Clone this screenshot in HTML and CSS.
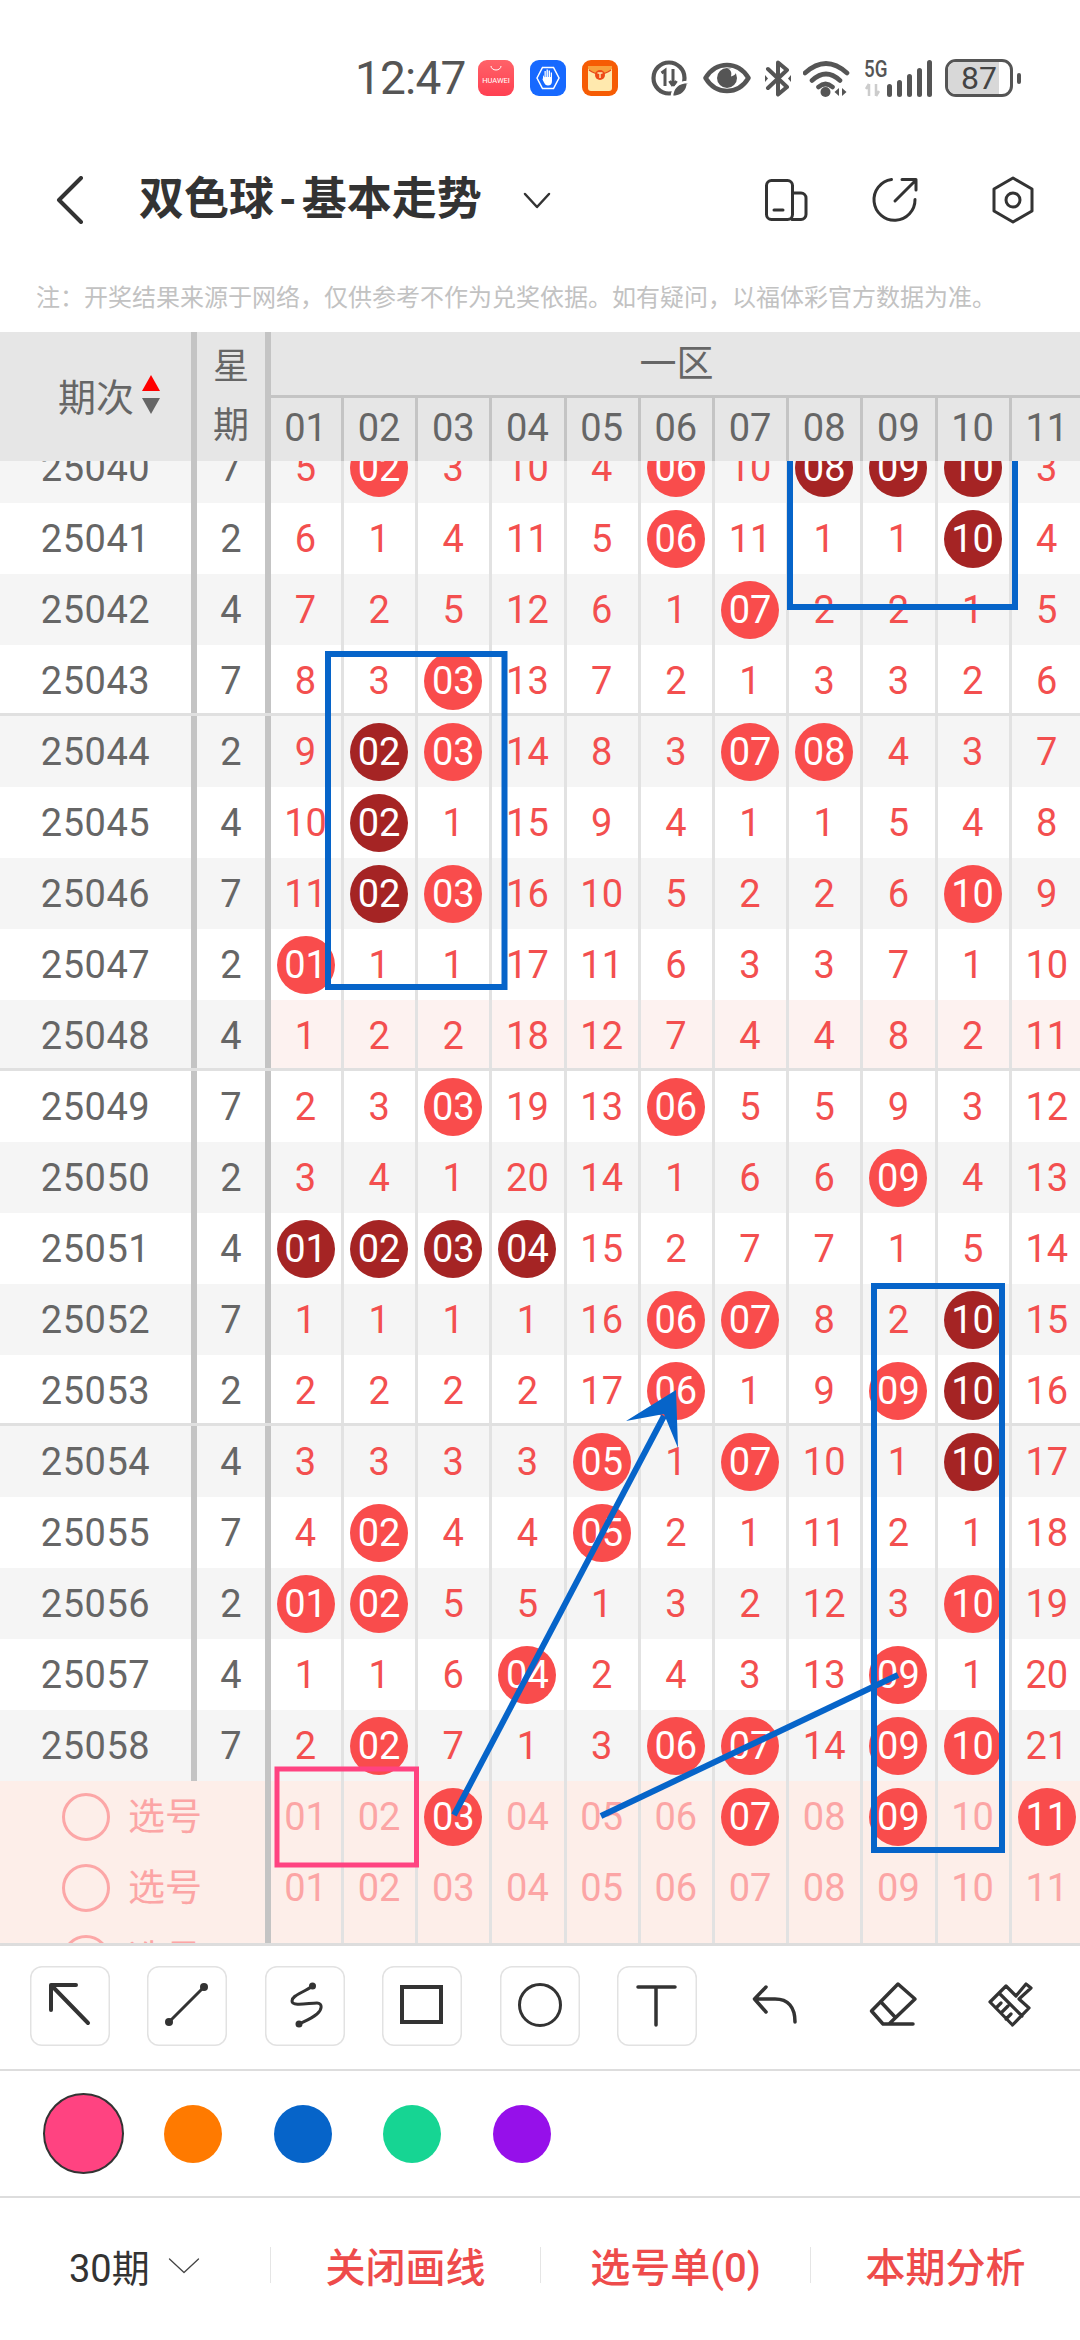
FILE: index.html
```html
<!DOCTYPE html>
<html lang="zh">
<head>
<meta charset="utf-8">
<title>双色球-基本走势</title>
<link rel="stylesheet" href="styles.css">
</head>
<body>
<div class="page">
  <header class="status">
    <span class="time">12:47</span>
    <span class="app app-red"><svg class="smile" viewBox="0 0 12 6" width="12" height="6"><path d="M1 1a5 4 0 0 0 10 0" fill="none" stroke="#fff" stroke-width="1"/></svg><span class="app-label">HUAWEI</span></span>
    <svg class="app app-blue" viewBox="0 0 36 36" width="36" height="36"><rect width="36" height="36" rx="9" fill="#1769ff"/><path d="M7 18 12.500 7.500h11L29 18l-5.500 10.500h-11Z" fill="none" stroke="#fff" stroke-width="1.500"/><path d="M13 18v-3l1.500 2.500V11h1.300v6h.7V9.500h1.400V17h.7v-6.500h1.400V17h.7v-4.500h1.300V21c0 3-1.500 4.500-4 4.500-2.200 0-3-1-4-3l-1.500-3Z" fill="#fff"/></svg>
    <svg class="app app-orange" viewBox="0 0 36 36" width="36" height="36"><rect width="36" height="36" rx="9" fill="#f65c04"/><rect x="6" y="6" width="24" height="25" rx="3" fill="#ffe9ae"/><path d="M6 9q12 10 24 0V6H6Z" fill="#f8a13c"/><path d="M7 10q11 8 22 0" fill="none" stroke="#e8481a" stroke-width="1.500"/><circle cx="18" cy="15" r="5" fill="#ef4a18"/><path d="M15.500 13h5M18 13v5" stroke="#ffe9ae" stroke-width="1.400"/></svg>
    <svg class="st-data" viewBox="0 0 37 37" width="37" height="37"><circle cx="18" cy="18" r="15.500" fill="none" stroke="#555" stroke-width="4.200"/><path d="M10.500 13l3.500-2.500V26M22 9v16M22 26l-3.500-5M22 26l3.500-5" fill="none" stroke="#555" stroke-width="3"/><path d="M21 37c0-9 6-15 16-15 0 9-6 15-16 15Z" fill="#555" stroke="#fff" stroke-width="2.500"/></svg>
    <svg class="st-eye" viewBox="0 0 48 32" width="48" height="32"><path d="M2.500 16C8 7 15 3 24 3s16 4 21.500 13C40 25 33 29 24 29S8 25 2.500 16Z" fill="none" stroke="#555" stroke-width="4.500" stroke-linejoin="round"/><circle cx="24" cy="16" r="10" fill="#555"/><path d="M24 6.500c4 1 5 4 4 8 4-1 5-3 5-5-2-2-5-3-9-3Z" fill="#fff"/></svg>
    <svg class="st-bt" viewBox="0 0 26 37" width="26" height="37"><path d="M3 9l19 18-9 7.500V2.500L22 10 3 28" fill="none" stroke="#555" stroke-width="4" stroke-linejoin="round" stroke-linecap="round"/><path d="M0 15v7l3-3.500ZM26 15v7l-3-3.500Z" fill="#555"/></svg>
    <svg class="st-wifi" viewBox="0 0 48 37" width="48" height="37"><path d="M2 13q21-19 42 0M9 20.500q14-13 28 0M15.500 27q7-6 14 0" fill="none" stroke="#555" stroke-width="4.600" stroke-linecap="round"/><circle cx="22.500" cy="32" r="5" fill="#555"/><path d="M36 28v8l-4.500-4ZM39 28v8l4.500-4Z" fill="#555"/></svg>
    <span class="st-sig">
      <span class="st-5g">5G</span>
      <svg viewBox="0 0 68 37" width="68" height="37"><path d="M5 24v12M5 24l-3 5M12 36V24M12 36l3-5" fill="none" stroke="#ccc" stroke-width="2.500"/><g fill="#555"><rect x="23" y="24" width="5" height="13" rx="2.500"/><rect x="33" y="20" width="5" height="17" rx="2.500"/><rect x="43" y="14" width="5" height="23" rx="2.500"/><rect x="53" y="8" width="5" height="29" rx="2.500"/><rect x="63" y="0" width="5" height="37" rx="2.500"/></g></svg>
    </span>
    <span class="battery"><span class="battery-fill"></span><span class="battery-num">87</span></span>
    <span class="battery-tip"></span>
  </header>

  <nav class="appbar">
    <svg class="nav-back" viewBox="0 0 28 48" width="28" height="48"><path d="M25 2 3 24l22 22" fill="none" stroke="#333" stroke-width="4" stroke-linecap="round" stroke-linejoin="round"/></svg>
    <h1 class="title">双色球<span class="title-dash">-</span>基本走势</h1>
    <svg class="nav-drop" viewBox="0 0 28 17" width="28" height="17"><path d="M2 2l12 13L26 2" fill="none" stroke="#333" stroke-width="2.500" stroke-linecap="round" stroke-linejoin="round"/></svg>
    <svg class="nav-device" viewBox="0 0 44 44" width="44" height="44"><rect x="2.500" y="2.500" width="26" height="39" rx="5" fill="none" stroke="#333" stroke-width="3"/><path d="M28.500 15H37a5 5 0 0 1 5 5v16.500a5 5 0 0 1-5 5h-9M10 32h9" fill="none" stroke="#333" stroke-width="3" stroke-linecap="round"/></svg>
    <svg class="nav-share" viewBox="0 0 48 48" width="48" height="48"><path d="M20.500 3.500A20.500 20.500 0 1 0 44 23.500M24 25 45 4M31 3.500h14V14" fill="none" stroke="#333" stroke-width="3" stroke-linecap="round" stroke-linejoin="round"/></svg>
    <svg class="nav-set" viewBox="0 0 44 48" width="44" height="48"><path d="M22 2 41 13v22L22 46 3 35V13Z" fill="none" stroke="#333" stroke-width="3" stroke-linejoin="round"/><circle cx="22" cy="24" r="7" fill="none" stroke="#333" stroke-width="3"/></svg>
  </nav>

  <p class="note">注：开奖结果来源于网络，仅供参考不作为兑奖依据。如有疑问，以福体彩官方数据为准。</p>

  <section class="table">
    <div class="thead">
      <div class="th-issue"><span>期次</span><span class="sort"><span class="sort-up"></span><span class="sort-down"></span></span></div>
      <div class="th-week"><span>星</span><span>期</span></div>
      <div class="th-zone">
        <div class="zone-name">一区</div>
        <div class="zone-nums"><i>01</i><i>02</i><i>03</i><i>04</i><i>05</i><i>06</i><i>07</i><i>08</i><i>09</i><i>10</i><i>11</i></div>
      </div>
    </div>
    <div class="tbody">
      <div class="rows">
        <div class="row alt"><span class="issue">25040</span><span class="wk">7</span><i>5</i><i><b class="hot">02</b></i><i>3</i><i>10</i><i>4</i><i><b class="hot">06</b></i><i>10</i><i><b class="dark">08</b></i><i><b class="dark">09</b></i><i><b class="dark">10</b></i><i>3</i></div>
        <div class="row"><span class="issue">25041</span><span class="wk">2</span><i>6</i><i>1</i><i>4</i><i>11</i><i>5</i><i><b class="hot">06</b></i><i>11</i><i>1</i><i>1</i><i><b class="dark">10</b></i><i>4</i></div>
        <div class="row alt"><span class="issue">25042</span><span class="wk">4</span><i>7</i><i>2</i><i>5</i><i>12</i><i>6</i><i>1</i><i><b class="hot">07</b></i><i>2</i><i>2</i><i>1</i><i>5</i></div>
        <div class="row sep"><span class="issue">25043</span><span class="wk">7</span><i>8</i><i>3</i><i><b class="hot">03</b></i><i>13</i><i>7</i><i>2</i><i>1</i><i>3</i><i>3</i><i>2</i><i>6</i></div>
        <div class="row alt"><span class="issue">25044</span><span class="wk">2</span><i>9</i><i><b class="dark">02</b></i><i><b class="hot">03</b></i><i>14</i><i>8</i><i>3</i><i><b class="hot">07</b></i><i><b class="hot">08</b></i><i>4</i><i>3</i><i>7</i></div>
        <div class="row"><span class="issue">25045</span><span class="wk">4</span><i>10</i><i><b class="dark">02</b></i><i>1</i><i>15</i><i>9</i><i>4</i><i>1</i><i>1</i><i>5</i><i>4</i><i>8</i></div>
        <div class="row alt"><span class="issue">25046</span><span class="wk">7</span><i>11</i><i><b class="dark">02</b></i><i><b class="hot">03</b></i><i>16</i><i>10</i><i>5</i><i>2</i><i>2</i><i>6</i><i><b class="hot">10</b></i><i>9</i></div>
        <div class="row"><span class="issue">25047</span><span class="wk">2</span><i><b class="hot">01</b></i><i>1</i><i>1</i><i>17</i><i>11</i><i>6</i><i>3</i><i>3</i><i>7</i><i>1</i><i>10</i></div>
        <div class="row alt sep tint"><span class="issue">25048</span><span class="wk">4</span><i>1</i><i>2</i><i>2</i><i>18</i><i>12</i><i>7</i><i>4</i><i>4</i><i>8</i><i>2</i><i>11</i></div>
        <div class="row"><span class="issue">25049</span><span class="wk">7</span><i>2</i><i>3</i><i><b class="hot">03</b></i><i>19</i><i>13</i><i><b class="hot">06</b></i><i>5</i><i>5</i><i>9</i><i>3</i><i>12</i></div>
        <div class="row alt"><span class="issue">25050</span><span class="wk">2</span><i>3</i><i>4</i><i>1</i><i>20</i><i>14</i><i>1</i><i>6</i><i>6</i><i><b class="hot">09</b></i><i>4</i><i>13</i></div>
        <div class="row"><span class="issue">25051</span><span class="wk">4</span><i><b class="dark">01</b></i><i><b class="dark">02</b></i><i><b class="dark">03</b></i><i><b class="dark">04</b></i><i>15</i><i>2</i><i>7</i><i>7</i><i>1</i><i>5</i><i>14</i></div>
        <div class="row alt"><span class="issue">25052</span><span class="wk">7</span><i>1</i><i>1</i><i>1</i><i>1</i><i>16</i><i><b class="hot">06</b></i><i><b class="hot">07</b></i><i>8</i><i>2</i><i><b class="dark">10</b></i><i>15</i></div>
        <div class="row sep"><span class="issue">25053</span><span class="wk">2</span><i>2</i><i>2</i><i>2</i><i>2</i><i>17</i><i><b class="hot">06</b></i><i>1</i><i>9</i><i><b class="hot">09</b></i><i><b class="dark">10</b></i><i>16</i></div>
        <div class="row alt"><span class="issue">25054</span><span class="wk">4</span><i>3</i><i>3</i><i>3</i><i>3</i><i><b class="hot">05</b></i><i>1</i><i><b class="hot">07</b></i><i>10</i><i>1</i><i><b class="dark">10</b></i><i>17</i></div>
        <div class="row"><span class="issue">25055</span><span class="wk">7</span><i>4</i><i><b class="hot">02</b></i><i>4</i><i>4</i><i><b class="hot">05</b></i><i>2</i><i>1</i><i>11</i><i>2</i><i>1</i><i>18</i></div>
        <div class="row alt"><span class="issue">25056</span><span class="wk">2</span><i><b class="hot">01</b></i><i><b class="hot">02</b></i><i>5</i><i>5</i><i>1</i><i>3</i><i>2</i><i>12</i><i>3</i><i><b class="hot">10</b></i><i>19</i></div>
        <div class="row"><span class="issue">25057</span><span class="wk">4</span><i>1</i><i>1</i><i>6</i><i><b class="hot">04</b></i><i>2</i><i>4</i><i>3</i><i>13</i><i><b class="hot">09</b></i><i>1</i><i>20</i></div>
        <div class="row alt"><span class="issue">25058</span><span class="wk">7</span><i>2</i><i><b class="hot">02</b></i><i>7</i><i>1</i><i>3</i><i><b class="hot">06</b></i><i><b class="hot">07</b></i><i>14</i><i><b class="hot">09</b></i><i><b class="hot">10</b></i><i>21</i></div>
        <div class="row pick"><span class="pick-label"><span class="radio"></span><span class="pick-text">选号</span></span><i>01</i><i>02</i><i><b class="hot">03</b></i><i>04</i><i>05</i><i>06</i><i><b class="hot">07</b></i><i>08</i><i><b class="hot">09</b></i><i>10</i><i><b class="hot">11</b></i></div>
        <div class="row pick"><span class="pick-label"><span class="radio"></span><span class="pick-text">选号</span></span><i>01</i><i>02</i><i>03</i><i>04</i><i>05</i><i>06</i><i>07</i><i>08</i><i>09</i><i>10</i><i>11</i></div>
        <div class="row pick"><span class="pick-label"><span class="radio"></span><span class="pick-text">选号</span></span><i>01</i><i>02</i><i>03</i><i>04</i><i>05</i><i>06</i><i>07</i><i>08</i><i>09</i><i>10</i><i>11</i></div>
      </div>
      <svg class="sketch" viewBox="0 461 1080 1482" width="1080" height="1482">
        <g fill="none" stroke="#0664c9" stroke-width="6">
          <rect x="790" y="420" width="225" height="187"/>
          <rect x="328" y="654" width="176.500" height="333"/>
          <rect x="874" y="1286" width="128" height="564"/>
          <path d="M454 1815 664 1416"/>
          <path d="M601 1816 898 1675"/>
        </g>
        <rect x="277" y="1769" width="139.500" height="96" fill="none" stroke="#ff4381" stroke-width="5"/>
        <path d="M676 1390 626 1421 664 1414 678 1448Z" fill="#0664c9"/>
      </svg>
    </div>
  </section>

  <section class="tools">
    <span class="tool framed"><svg viewBox="0 0 80 80" width="80" height="80"><path d="M46 19H21v25M22 20l36 37" fill="none" stroke="#333" stroke-width="4" stroke-linecap="round" stroke-linejoin="round"/></svg></span>
    <span class="tool framed"><svg viewBox="0 0 80 80" width="80" height="80"><path d="M57 21 22 56" stroke="#333" stroke-width="3"/><circle cx="57" cy="21" r="4" fill="#333"/><circle cx="22" cy="56" r="4" fill="#333"/></svg></span>
    <span class="tool framed"><svg viewBox="0 0 80 80" width="80" height="80"><path d="M47.500 20C38 27 27 29 27 35c0 6 17 2 25 2 6 0 5 7 0 11-6 5-12 7-18 10" fill="none" stroke="#333" stroke-width="3"/><circle cx="47.500" cy="20" r="3.500" fill="#333"/><circle cx="34" cy="58" r="3.500" fill="#333"/></svg></span>
    <span class="tool framed"><svg viewBox="0 0 80 80" width="80" height="80"><rect x="20" y="21" width="39" height="35" fill="none" stroke="#333" stroke-width="4"/></svg></span>
    <span class="tool framed"><svg viewBox="0 0 80 80" width="80" height="80"><circle cx="40" cy="39" r="20.500" fill="none" stroke="#333" stroke-width="3"/></svg></span>
    <span class="tool framed"><svg viewBox="0 0 80 80" width="80" height="80"><path d="M21 21h37M39 21v38" fill="none" stroke="#333" stroke-width="3.500" stroke-linecap="round"/></svg></span>
    <span class="tool"><svg viewBox="0 0 80 80" width="80" height="80"><path d="M31 21 19.500 33 31 46M20 33h20c13 0 20 8 20 23" fill="none" stroke="#333" stroke-width="3.500" stroke-linecap="round" stroke-linejoin="round"/></svg></span>
    <span class="tool"><svg viewBox="0 0 80 80" width="80" height="80"><path d="M45 18 62 33 36 58h-6L18.500 45ZM27.500 35.500 42 51M30 58h30" fill="none" stroke="#333" stroke-width="3.500" stroke-linecap="round" stroke-linejoin="round"/></svg></span>
    <span class="tool"><svg viewBox="0 0 80 80" width="80" height="80"><path d="M36 20 46 30 56 18l5 4-12 11 10 9-16.500 17L20 36ZM30 28 52 50M26 42l5-5M31 47l7-7M36 53l5-5" fill="none" stroke="#333" stroke-width="3.200" stroke-linecap="round" stroke-linejoin="round"/></svg></span>
  </section>

  <section class="colors">
    <span class="swatch swatch-big"></span>
    <span class="swatch swatch-orange"></span>
    <span class="swatch swatch-blue"></span>
    <span class="swatch swatch-green"></span>
    <span class="swatch swatch-purple"></span>
  </section>

  <footer class="bottom">
    <span class="bottom-range">30期<svg viewBox="0 0 32 17" width="32" height="17"><path d="M1.500 2 16 15.500 30.500 2" fill="none" stroke="#444" stroke-width="1.300" stroke-linecap="round" stroke-linejoin="round"/></svg></span>
    <span class="bottom-act">关闭画线</span>
    <span class="bottom-act">选号单(0)</span>
    <span class="bottom-act">本期分析</span>
  </footer>
</div>
</body>
</html>
```
FILE: styles.css
```css
* { box-sizing: border-box; }
html, body { margin: 0; padding: 0; background: #fff; }
body { font-family: Roboto, "Noto Sans CJK SC", sans-serif; color: #333; }
.page { width: 1080px; height: 2340px; overflow: hidden; display: flex; flex-direction: column; }
svg { display: block; flex: none; }

/* status bar */
.status { height: 130px; padding: 26px 0 0 355px; display: flex; align-items: center; flex: none; }
.time { font-size: 46px; color: #555; width: 110px; margin-right: 13px; letter-spacing: -.8px; white-space: nowrap; }
.app { flex: none; margin-right: 16px; }
.app-red { width: 36px; height: 36px; border-radius: 9px; background: linear-gradient(#ff6268, #ff4052); display: flex; flex-direction: column; align-items: center; padding-top: 5px; color: #fff; }
.app-label { font-size: 7.500px; line-height: 12px; margin-top: 4px; white-space: nowrap; }
.app-orange { margin-right: 33px; }
.st-data { margin-right: 15px; }
.st-eye { margin-right: 14px; }
.st-bt { margin-right: 12px; }
.st-wifi { margin-right: 13px; }
.st-sig { position: relative; width: 68px; height: 37px; margin-right: 13px; }
.st-5g { position: absolute; left: 0; top: -3px; font-size: 24px; line-height: 24px; font-weight: 500; color: #555; transform: scaleX(.78); transform-origin: left; }
.battery { position: relative; width: 68px; height: 38px; border: 3.500px solid #555; border-radius: 11px; overflow: hidden; display: flex; align-items: center; justify-content: center; }
.battery-fill { position: absolute; left: 0; top: 0; bottom: 0; width: 51px; background: #d8d8d8; }
.battery-num { position: relative; font-size: 32px; color: #444; line-height: 1; }
.battery-tip { width: 4px; height: 11px; border-radius: 2px; background: #555; margin-left: 4px; }

/* app bar */
.appbar { height: 140px; display: flex; align-items: center; padding-left: 56px; flex: none; }
.title { margin: 0 0 0 55px; font-size: 45px; line-height: 60px; font-weight: 700; color: #333; white-space: nowrap; width: 329px; }
.title-dash { margin: 0 5px; }
.nav-drop { margin: 0 0 0 55px; }
.nav-device { margin-left: 213px; }
.nav-share { margin-left: 63px; }
.nav-set { margin-left: 72px; }

.note { margin: 0; height: 62px; padding: 0 0 6px 36px; font-size: 24px; line-height: 56px; color: #c2c2c2; white-space: nowrap; flex: none; }

/* table */
.table { flex: none; }
.thead { display: grid; grid-template-columns: 197px 74px 1fr; height: 129px; background: #e6e6e6; color: #666; }
.th-issue { display: flex; align-items: center; gap: 8px; padding: 0 0 5px 58px; border-right: 6px solid #c4c4c4; font-size: 38px; }
.sort { display: flex; flex-direction: column; gap: 7px; }
.sort-up { width: 0; height: 0; border-left: 9.500px solid transparent; border-right: 9.500px solid transparent; border-bottom: 16px solid #f00; }
.sort-down { width: 0; height: 0; border-left: 9.500px solid transparent; border-right: 9.500px solid transparent; border-top: 16px solid #666; }
.th-week { display: flex; flex-direction: column; align-items: center; justify-content: center; gap: 23px; border-right: 6px solid #c4c4c4; font-size: 36px; line-height: 36px; }
.th-zone { display: flex; flex-direction: column; overflow: hidden; }
.zone-name { height: 66px; border-bottom: 3px solid #c4c4c4; font-size: 37px; line-height: 66px; text-align: center; padding-left: 2px; }
.zone-nums { display: grid; grid-template-columns: 73px repeat(10, 74.200px); height: 63px; font-size: 38px; }
.zone-nums i { border-right-color: #c4c4c4; padding-bottom: 3px; }

i { font-style: normal; display: flex; align-items: center; justify-content: center; border-right: 3px solid #e2e2e2; padding-right: 1px; min-width: 0; }

.tbody { position: relative; height: 1482px; overflow: hidden; }
.rows { margin-top: -29px; }
.row { position: relative; display: grid; grid-template-columns: 197px 74px 73px repeat(10, 74.200px); height: 71px; width: 1090px; font-size: 38px; color: #f34f4f; }
.row.alt { background: #f5f5f5; }
.row.sep::after { content: ""; position: absolute; left: 0; right: 0; bottom: 0; height: 3px; background: #e0e0e0; }
.row.tint i { background: #fdf2f0; }
.issue { display: flex; align-items: center; justify-content: center; border-right: 6px solid #c4c4c4; color: #666; letter-spacing: .5px; }
.wk { display: flex; align-items: center; justify-content: center; border-right: 6px solid #c4c4c4; color: #666; }
b { flex: none; width: 58px; height: 58px; border-radius: 50%; display: flex; align-items: center; justify-content: center; color: #fff; font-weight: 400; }
.hot { background: #f94c4c; }
.dark { background: #a52424; }
.row.pick { background: #fdeee9; color: #fca5a5; }
.pick-label { grid-column: span 2; display: flex; align-items: center; gap: 18px; padding-left: 62px; border-right: 6px solid #c4c4c4; font-size: 37px; }
.pick-text { margin-top: -5px; }
.radio { width: 48px; height: 48px; border: 3px solid #fca7a7; border-radius: 50%; flex: none; }
.sketch { position: absolute; left: 0; top: 0; }

/* tools */
.tools { flex: none; height: 128px; padding: 20px 0 0 29.500px; border-top: 3px solid #ddd; border-bottom: 2px solid #ddd; display: flex; gap: 37.600px; align-items: flex-start; }
.tool { flex: none; width: 80px; height: 80px; }
.tool.framed { box-shadow: inset 0 0 0 1.500px #e2e2e2; border-radius: 12px; }

.colors { flex: none; height: 127px; border-bottom: 2px solid #ddd; display: flex; align-items: center; gap: 51.500px; padding: 0 0 0 43px; }
.swatch { flex: none; width: 58px; height: 58px; border-radius: 50%; }
.swatch-big { width: 81px; height: 81px; margin-right: -11.500px; background: #ff4381; border: 2px solid #333; }
.swatch-orange { background: #ff7a00; }
.swatch-blue { background: #0664c9; }
.swatch-green { background: #16d593; }
.swatch-purple { background: #9610ea; }

.bottom { flex: none; height: 142px; padding-bottom: 8px; display: grid; grid-template-columns: 270px 270px 270px 270px; align-items: center; }
.bottom-range { display: flex; align-items: center; gap: 18px; padding-left: 69px; font-size: 38px; color: #333; white-space: nowrap; }
.bottom-act { height: 36px; border-left: 1.500px solid #e5e5e5; display: flex; align-items: center; justify-content: center; font-size: 40px; font-weight: 500; color: #ee4b4b; white-space: nowrap; }
```
